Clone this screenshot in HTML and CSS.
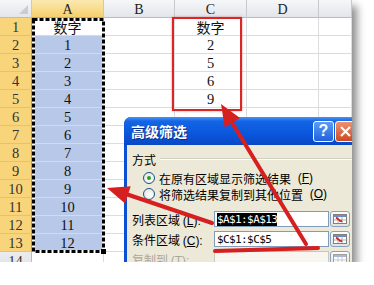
FILE: index.html
```html
<!DOCTYPE html>
<html lang="zh-CN">
<head>
    <meta charset="UTF-8">
    <title>高级筛选</title>
    <link rel="stylesheet" href="styles.css">
</head>
<body>
    <div class="shot">
        <div class="sheet">
            <div class="corner"></div><div class="ch sel">A</div><div class="ch">B</div><div class="ch">C</div><div class="ch">D</div><div class="ch"></div>

            <div class="rh sel">1</div><div class="c a first cjk">数字</div><div class="c"></div><div class="c cjk">数字</div><div class="c"></div><div class="c"></div>
            <div class="rh sel">2</div><div class="c a">1</div><div class="c"></div><div class="c">2</div><div class="c"></div><div class="c"></div>
            <div class="rh sel">3</div><div class="c a">2</div><div class="c"></div><div class="c">5</div><div class="c"></div><div class="c"></div>
            <div class="rh sel">4</div><div class="c a">3</div><div class="c"></div><div class="c">6</div><div class="c"></div><div class="c"></div>
            <div class="rh sel">5</div><div class="c a">4</div><div class="c"></div><div class="c">9</div><div class="c"></div><div class="c"></div>
            <div class="rh sel">6</div><div class="c a">5</div><div class="c"></div><div class="c"></div><div class="c"></div><div class="c"></div>
            <div class="rh sel">7</div><div class="c a">6</div><div class="c"></div><div class="c"></div><div class="c"></div><div class="c"></div>
            <div class="rh sel">8</div><div class="c a">7</div><div class="c"></div><div class="c"></div><div class="c"></div><div class="c"></div>
            <div class="rh sel">9</div><div class="c a">8</div><div class="c"></div><div class="c"></div><div class="c"></div><div class="c"></div>
            <div class="rh sel">10</div><div class="c a">9</div><div class="c"></div><div class="c"></div><div class="c"></div><div class="c"></div>
            <div class="rh sel">11</div><div class="c a">10</div><div class="c"></div><div class="c"></div><div class="c"></div><div class="c"></div>
            <div class="rh sel">12</div><div class="c a">11</div><div class="c"></div><div class="c"></div><div class="c"></div><div class="c"></div>
            <div class="rh sel">13</div><div class="c a">12</div><div class="c"></div><div class="c"></div><div class="c"></div><div class="c"></div>
            <div class="rh">14</div><div class="c"></div><div class="c"></div><div class="c"></div><div class="c"></div><div class="c"></div>
        </div>

        <!-- copy marquee around A1:A13 -->
        <svg class="ants" width="73" height="236" viewBox="0 0 73 236">
            <rect x="1.5" y="1.5" width="70" height="232" fill="none" stroke="#fff" stroke-width="3"/>
            <rect x="1.5" y="1.5" width="70" height="232" fill="none" stroke="#000" stroke-width="3" stroke-dasharray="4 2"/>
        </svg>
        <div class="handle"></div>

        <div class="redbox"></div>

        <div class="dialog">
            <div class="title">
                <span>高级筛选</span>
                <div class="tb help">?</div>
                <div class="tb close">
                    <svg width="13" height="13" viewBox="0 0 13 13"><path d="M2 2l9 9M11 2l-9 9" stroke="#fff" stroke-width="2.2"/></svg>
                </div>
            </div>
            <div class="body">
                <div class="legend">方式</div>
                <div class="opt"><span class="radio on"></span>在原有区域显示筛选结果 <span class="key">(<u>F</u>)</span></div>
                <div class="opt"><span class="radio"></span>将筛选结果复制到其他位置 <span class="key">(<u>O</u>)</span></div>

                <div class="field">
                    <label>列表区域 <span class="key">(<u>L</u>):</span></label>
                    <div class="input"><span class="hl">$A$1:$A$13</span></div>
                    <div class="pick">
                        <svg width="14" height="10" viewBox="0 0 14 10"><rect x="0.5" y="0.5" width="13" height="9" fill="#fff" stroke="#808080"/><rect x="1" y="1" width="12" height="2" fill="#6f8fc8"/><path d="M5 3v6M9 3v6M1 6h12" stroke="#b0b0b0"/><path d="M3 3.5l4.5 3.5" stroke="#d02020" stroke-width="1.6"/><path d="M9.5 8l-3.4-.2 2.4-2.4z" fill="#d02020"/></svg>
                    </div>
                </div>
                <div class="field">
                    <label>条件区域 <span class="key">(<u>C</u>):</span></label>
                    <div class="input">$C$1:$C$5</div>
                    <div class="pick">
                        <svg width="14" height="10" viewBox="0 0 14 10"><rect x="0.5" y="0.5" width="13" height="9" fill="#fff" stroke="#808080"/><rect x="1" y="1" width="12" height="2" fill="#6f8fc8"/><path d="M5 3v6M9 3v6M1 6h12" stroke="#b0b0b0"/><path d="M3 3.5l4.5 3.5" stroke="#d02020" stroke-width="1.6"/><path d="M9.5 8l-3.4-.2 2.4-2.4z" fill="#d02020"/></svg>
                    </div>
                </div>
                <div class="field off">
                    <label>复制到 <span class="key">(<u>T</u>):</span></label>
                    <div class="input"></div>
                    <div class="pick">
                        <svg width="14" height="10" viewBox="0 0 14 10"><rect x="0.5" y="0.5" width="13" height="9" fill="#fff" stroke="#a0a0a0"/><rect x="1" y="1" width="12" height="2" fill="#a8b8d8"/><path d="M5 3v6M9 3v6M1 6h12" stroke="#c8c8c8"/></svg>
                    </div>
                </div>
            </div>
        </div>

        <!-- hand drawn red arrows -->
        <svg class="marks" width="352" height="262" viewBox="0 0 352 262">
            <g stroke="#d61f1f" stroke-width="4" stroke-linecap="round" fill="none">
                <path d="M306 244L231 121"/>
                <path d="M212 223L126 194"/>
                <path d="M215 251L318 248"/>
            </g>
            <g fill="#d61f1f">
                <polygon points="221,104 240,118 224.7,127.5"/>
                <polygon points="107,188 130.7,186.2 125.1,203.4"/>
            </g>
        </svg>
    </div>
</body>
</html>
```

FILE: styles.css
```css
* {
    box-sizing: border-box;
}

body {
    margin: 0;
    background-color: #fff;
    font-family: "Liberation Serif", "Noto Sans CJK SC", serif;
}

.shot {
    position: relative;
    width: 352px;
    height: 262px;
    overflow: hidden;
    background-color: #fff;
    box-shadow: 5px 6px 8px rgba(0, 0, 0, 0.45);
}

/* worksheet */

.sheet {
    display: grid;
    grid-template-columns: 32px 72px 71px 72px 72px 33px;
    grid-auto-rows: 18px;
}

.corner {
    position: relative;
    background: linear-gradient(#f6f7f9, #e2e5ea);
    border-right: 1px solid #c6cacf;
    border-bottom: 1px solid #b8bdc4;
}

.corner::after {
    content: "";
    position: absolute;
    right: 3px;
    bottom: 3px;
    border-left: 9px solid transparent;
    border-bottom: 9px solid #c9ccd1;
}

.ch {
    display: flex;
    align-items: center;
    justify-content: center;
    padding-top: 2px;
    font-size: 14px;
    color: #222;
    background: linear-gradient(#f6f7f9, #e2e5ea);
    border-right: 1px solid #c6cacf;
    border-bottom: 1px solid #b8bdc4;
}

.ch.sel {
    background: linear-gradient(#fbe9b2, #f6d06c);
    border-bottom-color: #d9a93e;
}

.rh {
    display: flex;
    align-items: center;
    justify-content: center;
    padding-top: 2px;
    font-size: 14.5px;
    color: #333;
    background: linear-gradient(#ececee, #dfe2e6);
    border-right: 1px solid #b8bdc4;
    border-bottom: 1px solid #c6cacf;
}

.rh.sel {
    background: #f8d57b;
    border-bottom-color: #edc25e;
    border-right-color: #c99b3c;
}

.c {
    display: flex;
    align-items: center;
    justify-content: center;
    padding-top: 2px;
    font-size: 14.5px;
    color: #111;
    border-right: 1px solid #dadcdf;
    border-bottom: 1px solid #dadcdf;
}

.c.a {
    background-color: #b8c8e8;
    border-bottom-color: #d2dbee;
}

.c.a.first {
    background-color: #fff;
}

.cjk {
    font-family: "Noto Sans CJK SC", sans-serif;
    font-size: 14px;
    padding-top: 0;
}

.ants {
    position: absolute;
    left: 32px;
    top: 18px;
}

.handle {
    position: absolute;
    left: 101px;
    top: 249px;
    width: 5px;
    height: 5px;
    background-color: #000;
}

.redbox {
    position: absolute;
    left: 172px;
    top: 17px;
    width: 70px;
    height: 94px;
    border: 2px solid #dc2626;
    box-shadow: 0 0 2px rgba(200, 30, 30, 0.5);
}

/* XP style dialog */

.dialog {
    position: absolute;
    left: 124px;
    top: 117px;
    width: 240px;
    background-color: #0b4fd3;
    border-radius: 7px 7px 0 0;
    font-family: "Noto Sans CJK SC", sans-serif;
    font-size: 12px;
    color: #000;
}

.title {
    display: flex;
    align-items: center;
    gap: 1px;
    height: 28px;
    padding: 0 8px 0 7px;
    color: #fff;
    font-size: 14px;
    font-weight: bold;
    border-radius: 7px 7px 0 0;
    background: linear-gradient(#4a93f5, #1465e6 15%, #0a56dc 60%, #0848c6);
}

.title span {
    text-shadow: 1px 1px 0 #0a2f8a;
}

.tb {
    display: flex;
    align-items: center;
    justify-content: center;
    width: 21px;
    height: 21px;
    border: 1px solid #fff;
    border-radius: 3px;
}

.help {
    margin-left: auto;
    font-family: "Liberation Sans", sans-serif;
    font-size: 16px;
    background: linear-gradient(#5c9cf6, #1f62dc);
}

.close {
    background: linear-gradient(#eb9272, #cc4a22);
}

.body {
    display: flex;
    flex-direction: column;
    margin-left: 3px;
    height: 130px;
    padding: 6px 0 0 5px;
    background-color: #ece9d8;
}

.key {
    font-family: "Liberation Sans", sans-serif;
    font-size: 12px;
}

.legend {
    display: flex;
    align-items: center;
    height: 16px;
}

.legend::after {
    content: "";
    flex: 1;
    margin: 0 0 0 4px;
    border-top: 1px solid #d0d0bf;
    border-bottom: 1px solid #fff;
}

.opt {
    display: flex;
    align-items: center;
    gap: 4px;
    height: 16px;
    padding-left: 11px;
    white-space: pre;
}

.legend + .opt {
    margin-top: 3px;
}

.radio {
    position: relative;
    width: 12px;
    height: 12px;
    border: 1px solid #1c5180;
    border-radius: 50%;
    background: radial-gradient(circle at 60% 60%, #fff, #dcdcd5);
}

.radio.on::after {
    content: "";
    position: absolute;
    left: 3px;
    top: 3px;
    width: 4px;
    height: 4px;
    border-radius: 50%;
    background-color: #21a121;
}

.field {
    display: flex;
    align-items: center;
    height: 16px;
    margin-top: 4px;
}

.opt + .field {
    margin-top: 9px;
}

.field label {
    width: 82px;
    white-space: pre;
}

.input {
    display: flex;
    align-items: center;
    width: 115px;
    height: 16px;
    padding-left: 2px;
    border: 1px solid #7f9db9;
    background-color: #fff;
    font-family: "DejaVu Sans Mono", monospace;
    font-size: 11px;
    letter-spacing: -0.6px;
}

.hl {
    background-color: #000;
    color: #fff;
}

.pick {
    display: flex;
    align-items: center;
    justify-content: center;
    width: 20px;
    height: 16px;
    margin-left: 1px;
    border: 1px solid #8aa0c0;
    border-radius: 3px;
    background: linear-gradient(#fdfdfb, #e4e2d8);
}

.field.off label {
    color: #aca899;
}

.field.off .input {
    border-color: #c9c7ba;
    background-color: #f7f6f1;
}

.marks {
    position: absolute;
    left: 0;
    top: 0;
}
```
